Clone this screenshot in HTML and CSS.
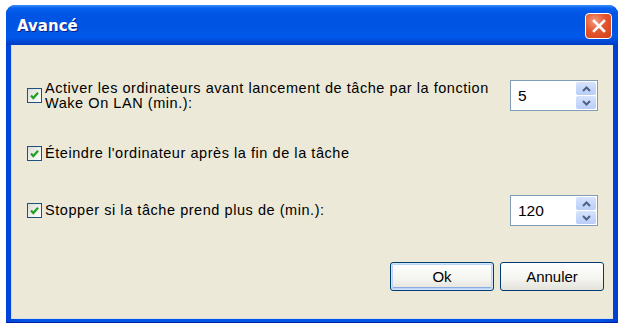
FILE: index.html
```html
<!DOCTYPE html>
<html lang="fr">
<head>
<meta charset="utf-8">
<title>Avancé</title>
<link rel="stylesheet" href="styles.css">
</head>
<body>
<div class="window">
  <div class="titlebar">
    <span class="title">Avancé</span>
    <button class="close" aria-label="Fermer">
      <svg width="16" height="16" viewBox="0 0 16 16"><path d="M3 3 L13 13 M13 3 L3 13" stroke="#fff" stroke-width="2.6" stroke-linecap="square"/></svg>
    </button>
  </div>
  <div class="client">
    <div class="row row1">
      <label class="check">
        <span class="box"><svg width="11" height="11" viewBox="0 0 11 11"><path d="M2 5.5 L4.3 8 L9 2.8" fill="none" stroke="#21A121" stroke-width="2.2"/></svg></span>
        <span class="text">
          <span class="line">Activer les ordinateurs avant lancement de tâche par la fonction</span>
          <span class="line">Wake On LAN (min.):</span>
        </span>
      </label>
      <div class="spin">
        <span class="val">5</span>
        <span class="arrows">
          <span class="arr"><svg width="9" height="6" viewBox="0 0 9 6"><path d="M1 5 L4.5 1.5 L8 5" fill="none" stroke="#4D6185" stroke-width="2"/></svg></span>
          <span class="arr"><svg width="9" height="6" viewBox="0 0 9 6"><path d="M1 1 L4.5 4.5 L8 1" fill="none" stroke="#4D6185" stroke-width="2"/></svg></span>
        </span>
      </div>
    </div>
    <div class="row row2">
      <label class="check">
        <span class="box"><svg width="11" height="11" viewBox="0 0 11 11"><path d="M2 5.5 L4.3 8 L9 2.8" fill="none" stroke="#21A121" stroke-width="2.2"/></svg></span>
        <span class="text"><span class="line">Éteindre l'ordinateur après la fin de la tâche</span></span>
      </label>
    </div>
    <div class="row row3">
      <label class="check">
        <span class="box"><svg width="11" height="11" viewBox="0 0 11 11"><path d="M2 5.5 L4.3 8 L9 2.8" fill="none" stroke="#21A121" stroke-width="2.2"/></svg></span>
        <span class="text"><span class="line">Stopper si la tâche prend plus de (min.):</span></span>
      </label>
      <div class="spin">
        <span class="val">120</span>
        <span class="arrows">
          <span class="arr"><svg width="9" height="6" viewBox="0 0 9 6"><path d="M1 5 L4.5 1.5 L8 5" fill="none" stroke="#4D6185" stroke-width="2"/></svg></span>
          <span class="arr"><svg width="9" height="6" viewBox="0 0 9 6"><path d="M1 1 L4.5 4.5 L8 1" fill="none" stroke="#4D6185" stroke-width="2"/></svg></span>
        </span>
      </div>
    </div>
    <div class="buttons">
      <button class="btn default">Ok</button>
      <button class="btn">Annuler</button>
    </div>
  </div>
</div>
</body>
</html>
```

FILE: styles.css
```css
html, body {
  margin: 0;
  padding: 0;
  background: #ffffff;
}
body {
  width: 623px;
  height: 326px;
  overflow: hidden;
  font-family: "Liberation Sans", Arial, sans-serif;
}
.window {
  margin: 5px 0 0 6px;
  width: 612px;
  height: 318px;
  box-sizing: border-box;
  border-radius: 9px 9px 0 0;
  background: linear-gradient(to right, #0042D6, #0055E5 3%, #0055E5 97%, #003DD0);
  display: flex;
  flex-direction: column;
  padding: 0 5px 4px 5px;
  box-shadow: inset 0 -1px 0 #001EA0;
}
.titlebar {
  height: 40px;
  margin: 0 -5px;
  padding: 0 6px 0 11px;
  border-radius: 9px 9px 0 0;
  background: linear-gradient(to bottom, #3A8CFF 0%, #0A62F0 8%, #0055E5 20%, #0054E3 55%, #0058EB 80%, #0047D4 93%, #003DC0 100%);
  display: flex;
  align-items: center;
  justify-content: space-between;
}
.title {
  color: #ffffff;
  font-family: "DejaVu Sans", sans-serif;
  font-weight: bold;
  font-size: 15px;
  text-shadow: 1px 1px 0 #0A1E8C;
  margin-top: 2px;
}
.close {
  width: 27px;
  height: 26px;
  margin-top: 2px;
  padding: 0;
  border: 1px solid #ffffff;
  border-radius: 4px;
  background: radial-gradient(circle at 35% 30%, #F29B7E 0%, #E4562E 45%, #D0401A 100%);
  display: flex;
  align-items: center;
  justify-content: center;
}
.client {
  flex: 1;
  background: #ECE9D8;
  box-shadow: inset 1px 0 0 #CCD8F2, inset 0 -1px 0 #D7DEEE;
  display: flex;
  flex-direction: column;
  padding: 0 15px 0 16px;
  color: #000;
  font-size: 14.5px;
}
.row {
  display: flex;
  align-items: center;
  justify-content: space-between;
}
.row1 { margin-top: 35px; height: 31px; }
.row2 { margin-top: 27px; height: 31px; }
.row3 { margin-top: 26px; height: 31px; }
.check {
  display: flex;
  align-items: center;
  gap: 3px;
}
.box {
  width: 13px;
  height: 13px;
  border: 1px solid #1C5180;
  background: linear-gradient(135deg, #DCDCD7, #FFFFFF);
  display: flex;
  align-items: center;
  justify-content: center;
  flex: none;
}
.text {
  display: flex;
  flex-direction: column;
  color: #000;
}
.line {
  display: block;
  line-height: 15px;
  letter-spacing: 0.55px;
  white-space: nowrap;
}
.spin {
  width: 88px;
  height: 31px;
  box-sizing: border-box;
  border: 1px solid #7F9DB9;
  background: #ffffff;
  display: flex;
  align-items: center;
  justify-content: space-between;
  padding: 1px 1px 1px 7px;
}
.val {
  font-size: 15.5px;
}
.arrows {
  width: 20px;
  height: 100%;
  display: flex;
  flex-direction: column;
  gap: 1px;
}
.arr {
  flex: 1;
  background: linear-gradient(to bottom, #D6E3FD, #B9CDF8);
  border-radius: 2px;
  display: flex;
  align-items: center;
  justify-content: center;
}
.buttons {
  display: flex;
  justify-content: flex-end;
  gap: 6px;
  margin-top: 36px;
  margin-right: -6px;
}
.btn {
  width: 104px;
  height: 29px;
  border: 1px solid #003C74;
  border-radius: 3px;
  background: linear-gradient(to bottom, #FFFFFF 0%, #F4F4F0 60%, #E3E2DA 100%);
  font-family: "Liberation Sans", Arial, sans-serif;
  font-size: 15px;
  color: #000;
  padding: 0;
}
.btn.default {
  box-shadow: inset 0 0 0 1px #CEE7FF, inset 0 0 0 2px #BCD4F6, inset 0 -2px 0 1px #89ADE4;
}
```
